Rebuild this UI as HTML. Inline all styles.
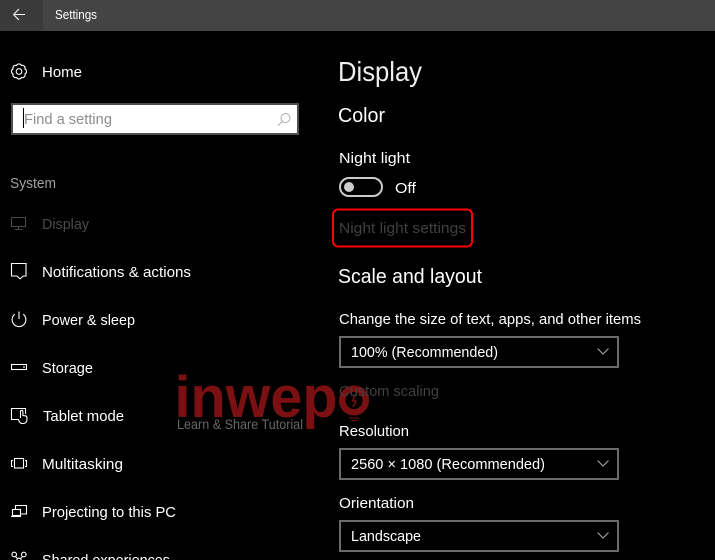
<!DOCTYPE html>
<html><head><meta charset="utf-8"><style>
html,body{margin:0;padding:0;background:#000;width:715px;height:560px;overflow:hidden}
svg{display:block}
text{font-family:"Liberation Sans",sans-serif;font-size:15px;fill:#fff}
</style></head><body>
<svg width="715" height="560" viewBox="0 0 715 560" xmlns="http://www.w3.org/2000/svg">
<rect width="715" height="560" fill="#000"/>
<rect width="715" height="31" fill="#444"/>
<rect width="43" height="31" fill="#3a3a3a"/>
<path d="M13.500 14.500H25M13.500 14.500L19 9M13.500 14.500L19 20" stroke="#fff" stroke-width="1.100" fill="none"/>
<text x="55" y="19" textLength="42" lengthAdjust="spacingAndGlyphs" style="font-size:12.500px">Settings</text>

<g stroke="#fff" fill="none" stroke-width="1.100">
<circle cx="19" cy="71.500" r="2.800"/>
<path d="M21.490 65.500A2.800 2.800 0 0 1 25 69.010A2.800 2.800 0 0 1 25 73.990A2.800 2.800 0 0 1 21.490 77.500A2.800 2.800 0 0 1 16.510 77.500A2.800 2.800 0 0 1 13 73.990A2.800 2.800 0 0 1 13 69.010A2.800 2.800 0 0 1 16.510 65.500A2.800 2.800 0 0 1 21.490 65.500Z"/>
</g>
<text x="42" y="77" textLength="40" lengthAdjust="spacingAndGlyphs">Home</text>

<rect x="12" y="104" width="286" height="30" fill="#fff" stroke="#4f4f4f" stroke-width="2"/>
<rect x="23" y="108" width="1" height="20" fill="#000"/>
<text x="24" y="124" textLength="88" lengthAdjust="spacingAndGlyphs" style="fill:#8c8c8c">Find a setting</text>
<g stroke="#aaa" fill="none" stroke-width="1"><circle cx="285.500" cy="118" r="4.500"/><path d="M282.300 121.500L278 125.500"/></g>

<text x="10" y="188" textLength="46" lengthAdjust="spacingAndGlyphs" style="fill:#a0a0a0">System</text>

<g stroke="#4a4a4a" fill="none" stroke-width="1"><rect x="11.500" y="217.500" width="14" height="9"/><path d="M18.500 227V229M15 229.500H22"/></g>
<text x="42" y="229" textLength="47" lengthAdjust="spacingAndGlyphs" style="fill:#4a4a4a">Display</text>

<g stroke="#fff" fill="none" stroke-width="1.100">
<path d="M11.500 263.500H26V276H23.500L20 278.800L17 276H11.500Z"/>
<path d="M14.800 314.200A6.900 6.900 0 1 0 23.200 314.200M19 311.500V319"/>
<rect x="11.500" y="364.500" width="15" height="5"/>
<path d="M23 367H25"/>
<path d="M18 419.500H11.500V408.500H25.500V414"/>
<path d="M20.500 418V411.500A1.200 1.200 0 0 1 22.900 411.500V415.500L25.400 415.800C26.400 416 26.900 416.600 26.900 417.500V420A3.500 3.500 0 0 1 23.400 423.500H22.200A3 3 0 0 1 19.700 422.200L18 419" fill="#000"/>
<rect x="14.500" y="458.500" width="9" height="9.500"/>
<path d="M13 460.500H11.500V466.500H13M25 460.500H26.500V466.500H25"/>
<path d="M15.500 509V505.500H26.500V514H21"/>
<rect x="12.500" y="509.500" width="8" height="6"/>
<path d="M11 516.500H21"/>
<circle cx="14.200" cy="554.500" r="2.300"/><circle cx="23.800" cy="554.500" r="2.300"/><circle cx="19" cy="560.500" r="2.300"/>
<path d="M15.500 556.500L17.700 558.800M22.500 556.500L20.300 558.800"/>
</g>
<text x="42" y="277" textLength="149" lengthAdjust="spacingAndGlyphs">Notifications &amp; actions</text>
<text x="42" y="325" textLength="93" lengthAdjust="spacingAndGlyphs">Power &amp; sleep</text>
<text x="42" y="373" textLength="51" lengthAdjust="spacingAndGlyphs">Storage</text>
<text x="43" y="421" textLength="81" lengthAdjust="spacingAndGlyphs">Tablet mode</text>
<text x="42" y="469" textLength="81" lengthAdjust="spacingAndGlyphs">Multitasking</text>
<text x="42" y="517" textLength="134" lengthAdjust="spacingAndGlyphs">Projecting to this PC</text>
<text x="42" y="565" textLength="128" lengthAdjust="spacingAndGlyphs">Shared experiences</text>

<text x="338" y="81" textLength="84" lengthAdjust="spacingAndGlyphs" style="font-size:28px;fill:#eee">Display</text>
<text x="338" y="122" textLength="47" lengthAdjust="spacingAndGlyphs" style="font-size:20px">Color</text>
<text x="339" y="163" textLength="71" lengthAdjust="spacingAndGlyphs">Night light</text>
<rect x="340" y="178" width="42" height="18" rx="9" fill="none" stroke="#ccc" stroke-width="2"/>
<circle cx="349" cy="187" r="5" fill="#ccc"/>
<text x="395" y="193" textLength="21" lengthAdjust="spacingAndGlyphs">Off</text>
<rect x="333" y="209.500" width="139" height="37" rx="5" fill="none" stroke="#f00" stroke-width="2"/>
<text x="339" y="233" textLength="127" lengthAdjust="spacingAndGlyphs" style="fill:#404040">Night light settings</text>
<text x="338" y="283" textLength="144" lengthAdjust="spacingAndGlyphs" style="font-size:20px">Scale and layout</text>
<text x="339" y="324" textLength="302" lengthAdjust="spacingAndGlyphs">Change the size of text, apps, and other items</text>

<rect x="340" y="337" width="278" height="30" fill="none" stroke="#6b6b6b" stroke-width="2"/>
<text x="351" y="357" textLength="147" lengthAdjust="spacingAndGlyphs">100% (Recommended)</text>
<path d="M597.500 348.500L603 354L608.500 348.500" stroke="#aaa" fill="none"/>

<!-- watermark -->
<text x="174.500" y="417" textLength="163" lengthAdjust="spacingAndGlyphs" style="font-size:58px;font-weight:bold;fill:#7a1012">inwep</text>
<g fill="none" stroke="#7a1012"><circle cx="354" cy="400.500" r="11.750" stroke-width="6.500"/><path d="M355 395L352.500 401H356L353 407" stroke-width="1.500"/><path d="M349 418H359M351 420.500H357" stroke-width="1"/></g>
<text x="177" y="429" textLength="126" lengthAdjust="spacingAndGlyphs" style="font-size:13.500px;fill:#666">Learn &amp; Share Tutorial</text>

<text x="339" y="396" textLength="100" lengthAdjust="spacingAndGlyphs" style="fill:#404040">Custom scaling</text>
<text x="339" y="436" textLength="70" lengthAdjust="spacingAndGlyphs">Resolution</text>
<rect x="340" y="449" width="278" height="30" fill="none" stroke="#6b6b6b" stroke-width="2"/>
<text x="351" y="469" textLength="194" lengthAdjust="spacingAndGlyphs">2560 × 1080 (Recommended)</text>
<path d="M597.500 460.500L603 466L608.500 460.500" stroke="#aaa" fill="none"/>
<text x="339" y="508" textLength="75" lengthAdjust="spacingAndGlyphs">Orientation</text>
<rect x="340" y="521" width="278" height="30" fill="none" stroke="#6b6b6b" stroke-width="2"/>
<text x="351" y="541" textLength="70" lengthAdjust="spacingAndGlyphs">Landscape</text>
<path d="M597.500 532.500L603 538L608.500 532.500" stroke="#aaa" fill="none"/>
</svg>
</body></html>
